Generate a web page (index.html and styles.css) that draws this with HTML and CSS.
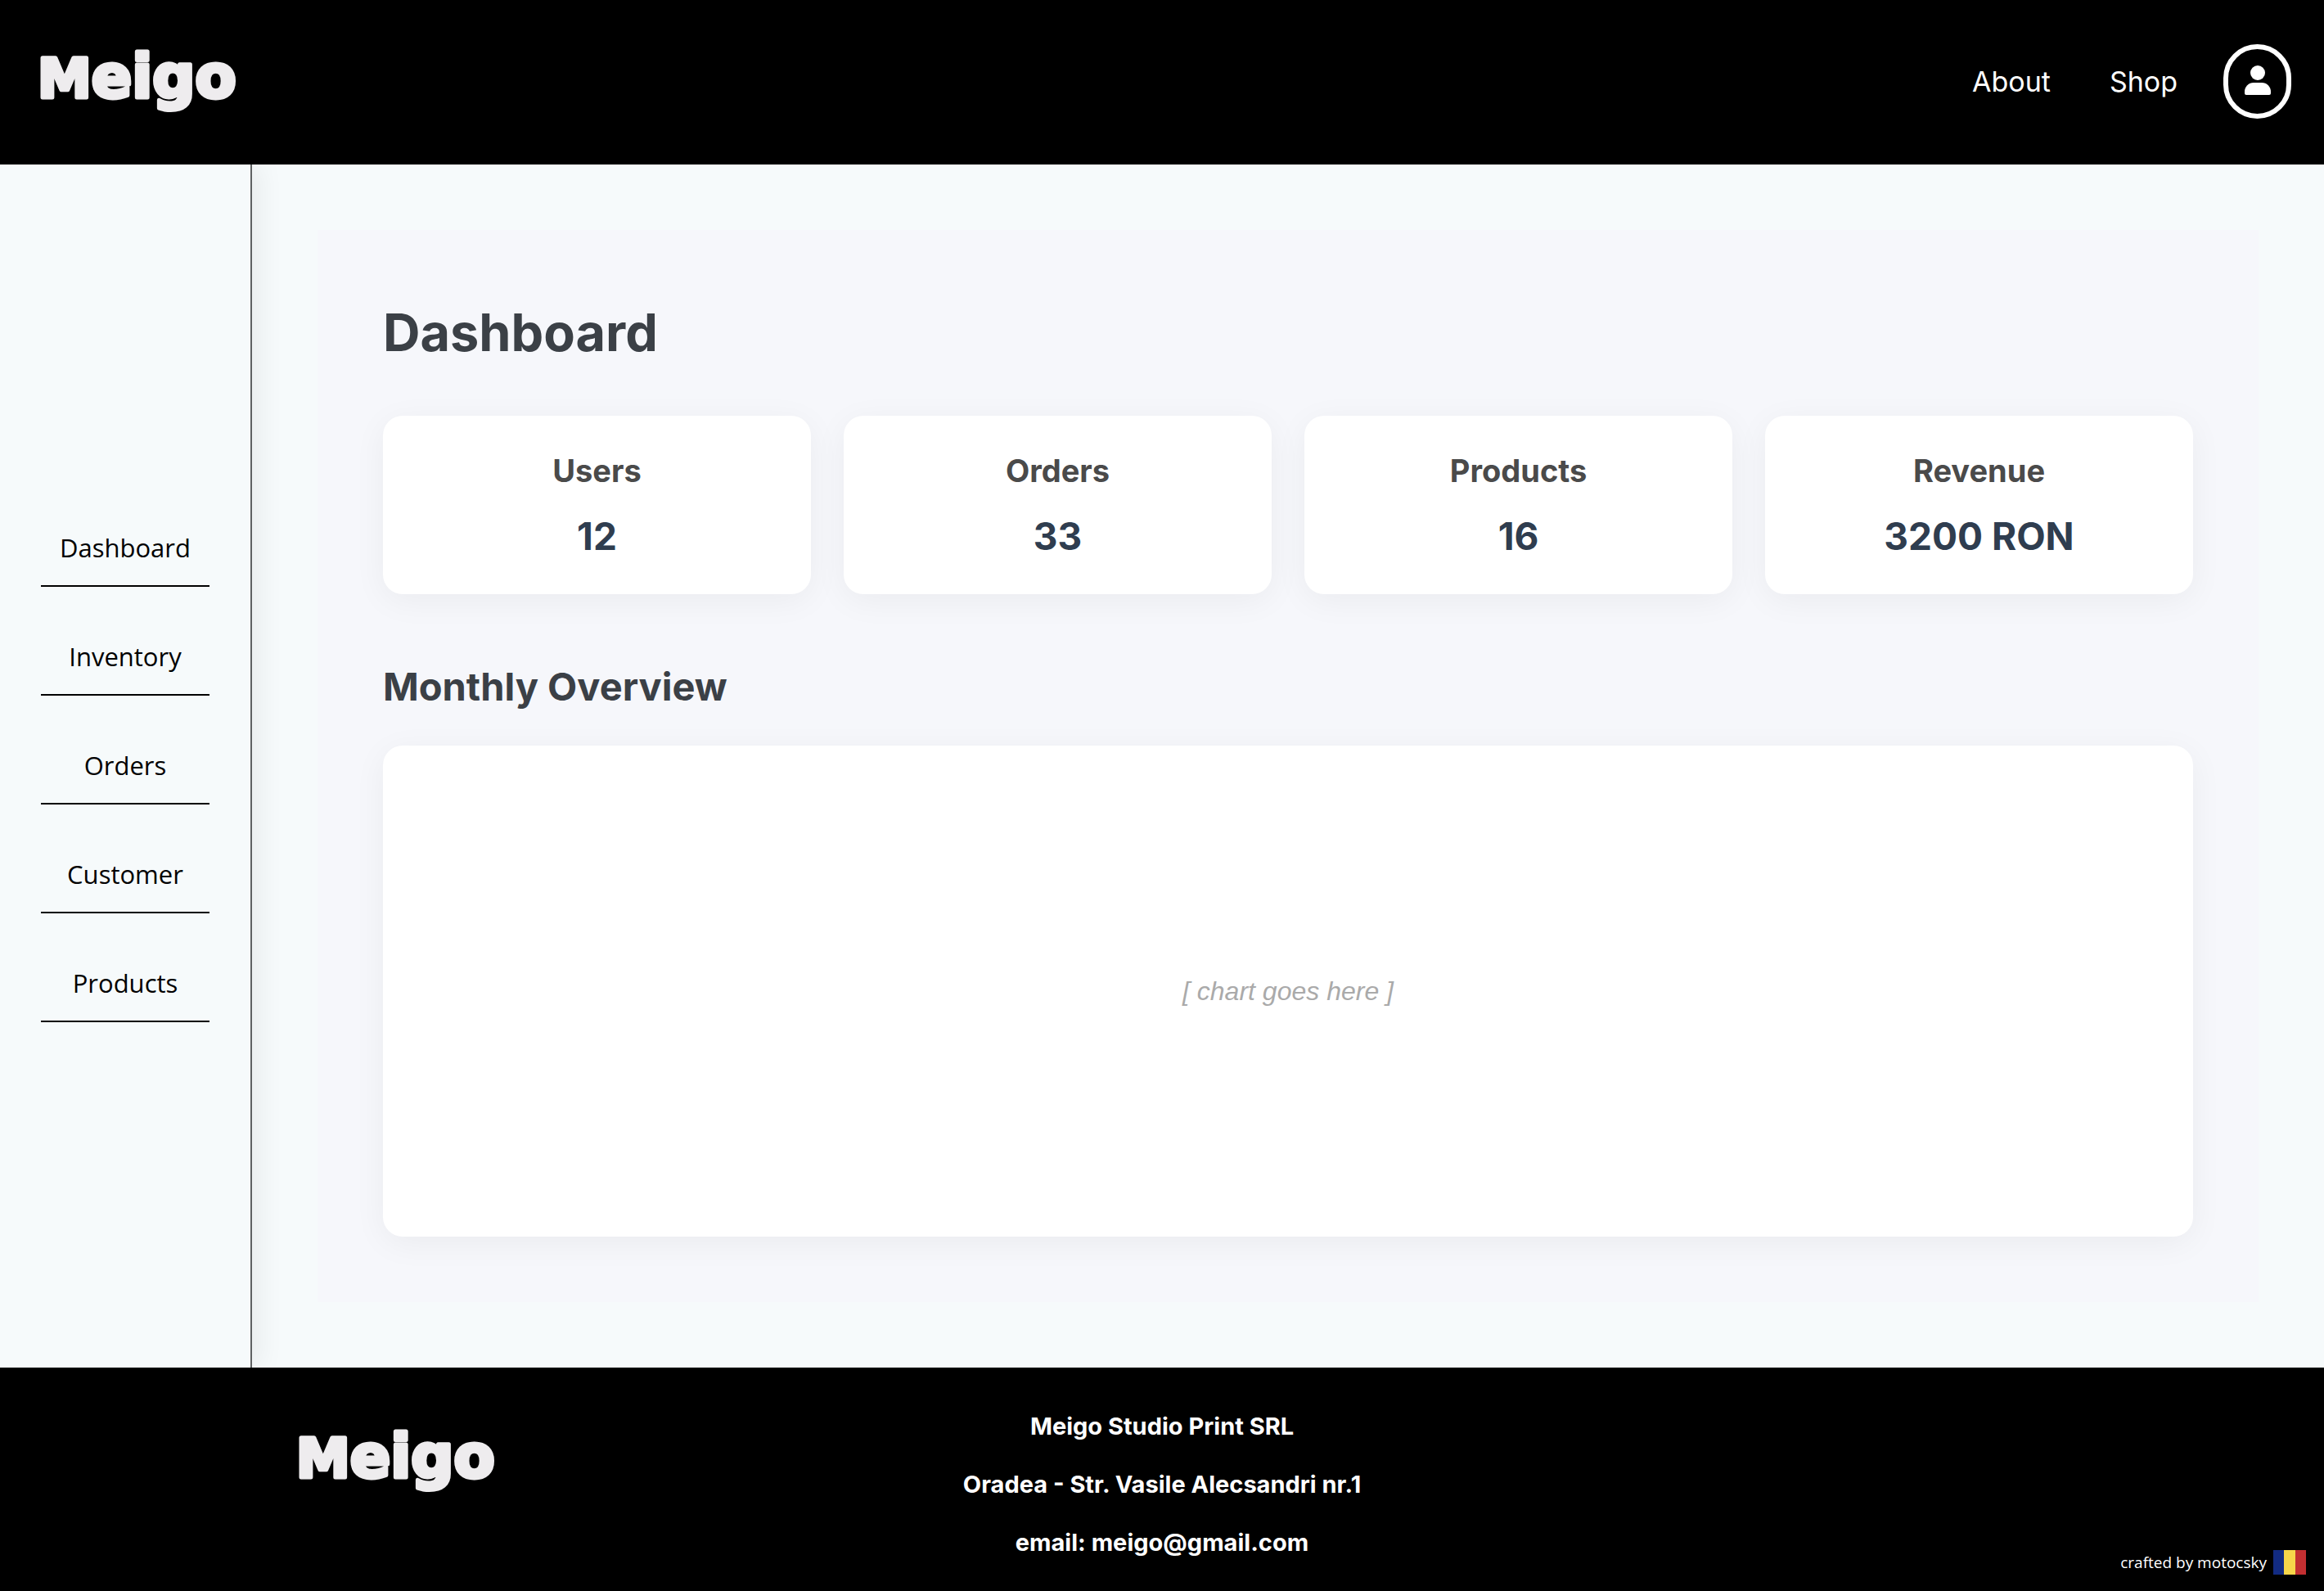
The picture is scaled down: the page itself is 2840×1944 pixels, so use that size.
FILE: index.html
```html
<!DOCTYPE html>
<html lang="en">
<head>
  <meta charset="utf-8">
  <meta name="viewport" content="width=device-width, initial-scale=1">
  <title>Meigo</title>
  <link rel="stylesheet" href="styles.css">
</head>
<body>
  <header class="site-header">
    <a class="logo" href="#">
      <svg class="logo-mark" viewBox="0 0 246 82" role="img" aria-label="Meigo">
        <text x="-2" y="60"><tspan class="logo-cap">M</tspan><tspan>eigo</tspan></text>
      </svg>
    </a>
    <nav class="site-nav">
      <a href="#">About</a>
      <a href="#">Shop</a>
      <button class="profile" type="button" aria-label="Account">
        <svg class="profile-icon" viewBox="0 0 32 40" aria-hidden="true">
          <circle cx="16" cy="11" r="9"/>
          <path d="M0 36V34a11 11 0 0 1 11-11h10a11 11 0 0 1 11 11v2q0 2-2 2H2q-2 0-2-2z"/>
        </svg>
      </button>
    </nav>
  </header>

  <div class="layout">
    <nav class="sidebar" aria-label="Admin">
      <a href="#">Dashboard</a>
      <a href="#">Inventory</a>
      <a href="#">Orders</a>
      <a href="#">Customer</a>
      <a href="#">Products</a>
    </nav>
    <main class="content">
      <div class="panel">
        <h1>Dashboard</h1>
        <section class="stats">
          <article class="card stat"><h3>Users</h3><p>12</p></article>
          <article class="card stat"><h3>Orders</h3><p>33</p></article>
          <article class="card stat"><h3>Products</h3><p>16</p></article>
          <article class="card stat"><h3>Revenue</h3><p>3200 RON</p></article>
        </section>
        <h2>Monthly Overview</h2>
        <section class="card chart">[ chart goes here ]</section>
      </div>
    </main>
  </div>

  <footer class="site-footer">
    <a class="logo footer-logo" href="#">
      <svg class="logo-mark" viewBox="0 0 246 82" role="img" aria-label="Meigo">
        <text x="-2" y="60"><tspan class="logo-cap">M</tspan><tspan>eigo</tspan></text>
      </svg>
    </a>
    <address class="company">
      <p>Meigo Studio Print SRL</p>
      <p>Oradea - Str. Vasile Alecsandri nr.1</p>
      <p>email: meigo@gmail.com</p>
    </address>
    <p class="credit">crafted by motocsky
      <svg class="flag" viewBox="0 0 40 30" role="img" aria-label="Romania">
        <path fill="#122b82" d="M0 0h13v30H0z"/>
        <path fill="#f6d54a" d="M13 0h14v30H13z"/>
        <path fill="#c22f31" d="M27 0h13v30H27z"/>
      </svg>
    </p>
  </footer>
</body>
</html>
```
FILE: styles.css
```css
* {
  box-sizing: border-box;
}

body {
  display: flex;
  flex-direction: column;
  min-height: 100vh;
  margin: 0;
  background: #f6fafb;
  font-family: Inter, "Liberation Sans", sans-serif;
}

h1, h2, h3, p {
  margin: 0;
}

a {
  color: inherit;
  text-decoration: none;
}

/* Header */

.site-header {
  position: relative;
  display: flex;
  align-items: center;
  justify-content: space-between;
  padding: 54px 40px 56px 48px;
  background: #000;
  color: #fff;
}

.logo {
  display: block;
}

.logo-mark {
  display: block;
  width: 246px;
  height: 82px;
  overflow: visible;
  fill: #eeecee;
  stroke: #eeecee;
  stroke-width: 5px;
  stroke-linejoin: round;
  font-family: "DejaVu Sans", sans-serif;
  font-size: 73px;
  font-weight: 700;
}

.logo-cap {
  font-size: 66px;
}

.site-nav {
  display: flex;
  align-items: center;
  gap: 72px;
  font-size: 34px;
  line-height: 44px;
}

.profile {
  display: flex;
  align-items: center;
  justify-content: center;
  width: 83px;
  height: 91px;
  margin-left: -16px;
  padding: 0 0 4px;
  border: 6px solid #fff;
  border-radius: 50px;
  background: none;
  color: #fff;
}

.profile-icon {
  width: 32px;
  height: 40px;
  fill: currentColor;
}

/* Page body */

.layout {
  display: flex;
  flex: 1;
}

.sidebar {
  display: flex;
  flex: none;
  flex-direction: column;
  justify-content: center;
  gap: 40px;
  width: 308px;
  padding: 0 50px;
  border-right: 2px solid #5f6263;
  box-shadow: 10px 0 30px rgba(0, 0, 0, 0.06);
  color: #000;
  font-family: "Open Sans", "Noto Sans", sans-serif;
  font-size: 31px;
  line-height: 43px;
  text-align: center;
}

.sidebar a {
  padding: 24px 0;
  border-bottom: 2px solid #000;
}

.content {
  flex: 1;
  padding: 80px;
}

.panel {
  padding: 80px;
  background: #f6f7fb;
  color: #3b4046;
}

h1 {
  margin-bottom: 57px;
  font-size: 63px;
  font-weight: 700;
  line-height: 90px;
}

h2 {
  margin: 80px 0 39px;
  font-size: 47px;
  font-weight: 700;
  line-height: 66px;
}

.stats {
  display: grid;
  grid-template-columns: repeat(4, 1fr);
  gap: 40px;
}

.card {
  border-radius: 24px;
  background: #fff;
  box-shadow: 0 8px 40px rgba(0, 0, 0, 0.05);
}

.stat {
  display: flex;
  flex-direction: column;
  gap: 20px;
  padding: 39px 40px;
  text-align: center;
}

.stat h3 {
  color: #4a4a4a;
  font-size: 38px;
  font-weight: 700;
  line-height: 56px;
}

.stat p {
  color: #2f3d4f;
  font-size: 46px;
  font-weight: 700;
  line-height: 64px;
}

.chart {
  display: flex;
  align-items: center;
  justify-content: center;
  min-height: 600px;
  color: #aaa;
  font-family: "Liberation Sans", Arial, sans-serif;
  font-size: 32px;
  font-style: italic;
}

/* Footer */

.site-footer {
  position: relative;
  display: grid;
  grid-template-columns: repeat(3, 1fr);
  padding: 36px 0 20px;
  background: #000;
  color: #fff;
}

.footer-logo {
  justify-self: center;
  padding: 38px 0 0 28px;
}

.company {
  margin-bottom: 4px;
  font-size: 29px;
  font-style: normal;
  font-weight: 700;
  line-height: 71px;
  text-align: center;
}

.credit {
  display: flex;
  align-items: center;
  align-self: end;
  justify-self: end;
  gap: 8px;
  padding-right: 22px;
  font-family: "Open Sans", "Noto Sans", sans-serif;
  font-size: 19px;
  font-weight: 500;
  line-height: 24px;
}

.flag {
  width: 40px;
  height: 30px;
}
```
